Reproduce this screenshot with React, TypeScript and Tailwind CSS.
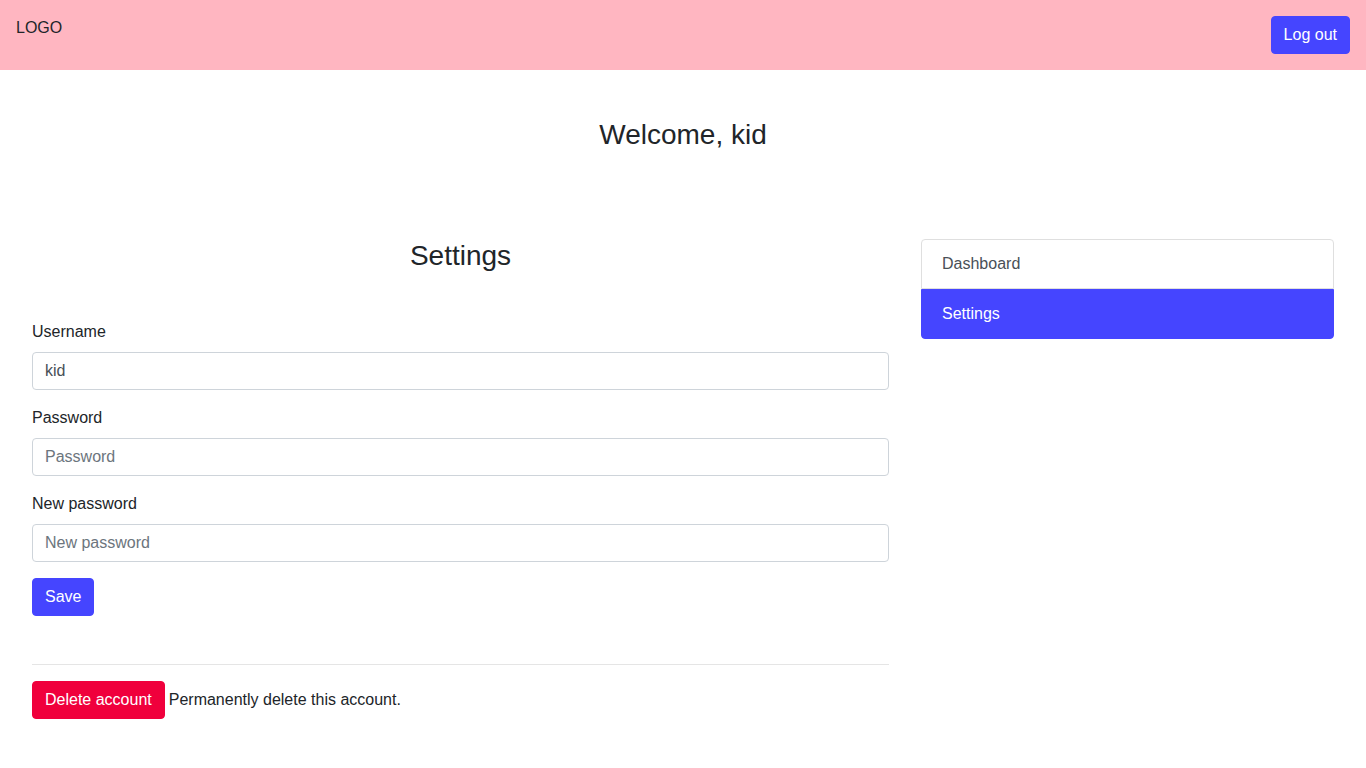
export default function App() {
  return (
    <div className="min-h-screen bg-white text-[16px] leading-6 text-[#212529] font-['Liberation_Sans',Arial,sans-serif]">
      <header className="flex h-[70px] items-start justify-between bg-[#ffb6c1] p-4">
        <div className="text-[#212529]">LOGO</div>
        <button className="h-[38px] rounded border border-[#4545ff] bg-[#4545ff] px-3 text-white">Log out</button>
      </header>

      <h3 className="mt-[48px] text-center text-[28px] leading-[34px]">Welcome, kid</h3>

      <div className="mt-[87px] flex gap-8 px-8">
        <div className="w-[857px]">
          <h3 className="text-center text-[28px] leading-[34px]">Settings</h3>
          <form className="mt-[47px]">
            <div className="mb-4">
              <label className="mb-2 block">Username</label>
              <input
                defaultValue="kid"
                className="block h-[38px] w-full rounded border border-[#ced4da] px-3 text-[#495057] outline-none"
              />
            </div>
            <div className="mb-4">
              <label className="mb-2 block">Password</label>
              <input
                type="password"
                placeholder="Password"
                className="block h-[38px] w-full rounded border border-[#ced4da] px-3 text-[#495057] outline-none placeholder:text-[#6c757d]"
              />
            </div>
            <div className="mb-4">
              <label className="mb-2 block">New password</label>
              <input
                type="password"
                placeholder="New password"
                className="block h-[38px] w-full rounded border border-[#ced4da] px-3 text-[#495057] outline-none placeholder:text-[#6c757d]"
              />
            </div>
            <button type="button" className="h-[38px] rounded border border-[#4545ff] bg-[#4545ff] px-3 text-white">Save</button>
          </form>
          <hr className="mt-12 mb-4 border-t border-[#e5e5e5]" />
          <div className="flex items-center">
            <button className="h-[38px] rounded border border-[#f0003c] bg-[#f0003c] px-3 text-white">Delete account</button>
            <span className="ml-1">Permanently delete this account.</span>
          </div>
        </div>

        <div className="w-[413px]">
          <div className="flex flex-col">
            <a className="block rounded-t border border-[#dfdfdf] px-5 py-3 text-[#495057]">Dashboard</a>
            <a className="block rounded-b border border-[#4545ff] bg-[#4545ff] px-5 py-3 text-white">Settings</a>
          </div>
        </div>
      </div>
    </div>
  );
}
